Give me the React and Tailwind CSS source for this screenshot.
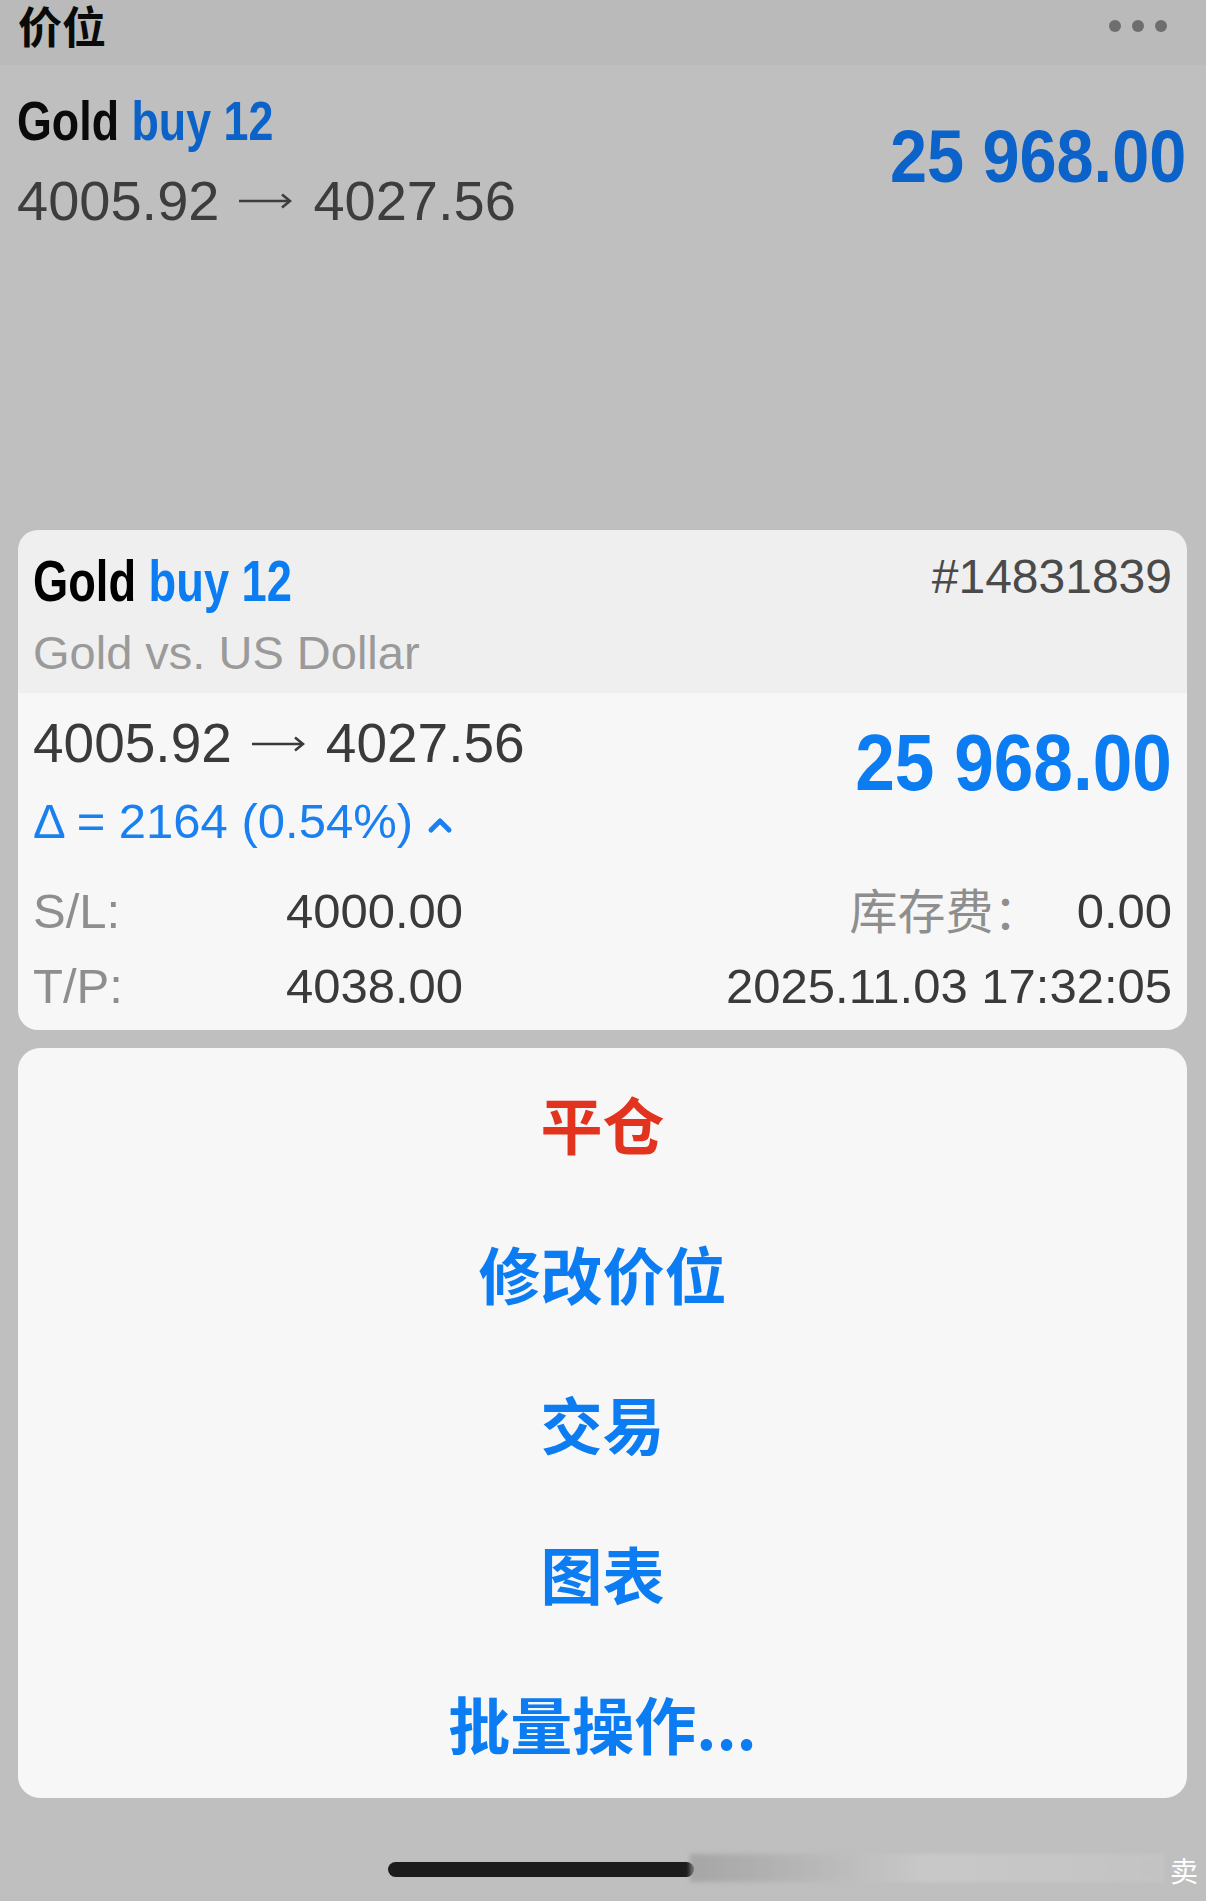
import React from "react";

function Arrow({ color }) {
  return (
    <svg width="54" height="16" viewBox="0 0 54 16" className="shrink-0">
      <line x1="1" y1="8" x2="51" y2="8" stroke={color} strokeWidth="2.6" />
      <polyline points="44,1.5 52,8 44,14.5" fill="none" stroke={color} strokeWidth="2.6" strokeLinejoin="miter" />
    </svg>
  );
}

function PriceLine({ color, big }) {
  return (
    <div className={(big ? "text-[56px]" : "text-[55px]") + " flex items-center leading-none whitespace-nowrap"} style={{ color }}>
      <span>4005.92</span>
      <span className="ml-[19px] mr-[21px] flex items-center"><Arrow color={color} /></span>
      <span>4027.56</span>
    </div>
  );
}

export default function App() {
  return (
    <div className="w-[1206px] h-[1901px] bg-[#bfbfbf] overflow-hidden font-['Liberation_Sans','Noto_Sans_CJK_SC',sans-serif] flex flex-col">
      {/* header */}
      <div className="h-[65px] bg-[#bababa] flex items-start justify-between pl-[18px] pr-[39px] shrink-0">
        <div className="text-[44px] leading-[50px] font-bold text-[#0a0a0a] font-['Noto_Sans_CJK_SC',sans-serif]">价位</div>
        <div className="flex gap-[11px] pt-[20px]">
          <span className="w-[12px] h-[12px] rounded-full bg-[#6e6e6e]" />
          <span className="w-[12px] h-[12px] rounded-full bg-[#6e6e6e]" />
          <span className="w-[12px] h-[12px] rounded-full bg-[#6e6e6e]" />
        </div>
      </div>

      {/* dimmed row */}
      <div className="h-[465px] shrink-0 flex justify-between items-start pl-[17px] pr-[20px]">
        <div className="flex flex-col pt-[28px]">
          <div className="text-[56px] leading-none font-bold whitespace-nowrap origin-left scale-x-[0.8]">
            <span className="text-[#0a0a0a]">Gold</span> <span className="text-[#0b62c9]">buy 12</span>
          </div>
          <div className="mt-[24px]">
            <PriceLine color="#3d3d3d" big />
          </div>
        </div>
        <div className="pt-[55px] text-[74px] leading-none font-bold text-[#0b62c9] whitespace-nowrap origin-right scale-x-[0.9]">25 968.00</div>
      </div>

      {/* position card */}
      <div className="mx-[18px] w-[1169px] rounded-[20px] overflow-hidden shrink-0">
        <div className="h-[163px] bg-[#efefef] pl-[15px] pr-[15px] pt-[22px]">
          <div className="flex justify-between items-start">
            <div className="text-[58px] leading-none font-bold whitespace-nowrap origin-left scale-x-[0.78]">
              <span className="text-black">Gold</span> <span className="text-[#0b7cf2]">buy 12</span>
            </div>
            <div className="mt-[1px] text-[48px] leading-none text-[#4a4a4a]">#14831839</div>
          </div>
          <div className="mt-[19px] text-[47px] leading-none text-[#9a9a9a] whitespace-nowrap">Gold vs. US Dollar</div>
        </div>
        <div className="h-[337px] bg-[#f7f7f7] pl-[15px] pr-[15px] pt-[23px]">
          <div className="flex justify-between items-start">
            <div className="flex flex-col">
              <PriceLine color="#3a3a3c" />
              <div className="mt-[26px] flex items-center gap-[13px] text-[49px] leading-none text-[#1a80f0] whitespace-nowrap">
                <span>Δ = 2164 (0.54%)</span>
                <svg width="28" height="18" viewBox="0 0 28 18" className="mt-[6px]">
                  <polyline points="5,14 14,5 23,14" fill="none" stroke="#1a80f0" strokeWidth="5" strokeLinecap="round" strokeLinejoin="round" />
                </svg>
              </div>
            </div>
            <div className="mt-[7px] text-[80px] leading-none font-bold text-[#0b7cf2] whitespace-nowrap origin-right scale-x-[0.89]">25 968.00</div>
          </div>
          <div className="mt-[41px] flex items-start text-[49px] leading-none">
            <span className="w-[253px] text-[#8e8e8e]">S/L:</span>
            <span className="text-[#3a3a3c]">4000.00</span>
            <span className="ml-auto mt-[-3px] text-[#8e8e8e] font-['Noto_Sans_CJK_SC',sans-serif] text-[48px]">库存费：</span>
            <span className="ml-[35px] text-[#3a3a3c]">0.00</span>
          </div>
          <div className="mt-[26px] flex items-start text-[49px] leading-none">
            <span className="w-[253px] text-[#8e8e8e]">T/P:</span>
            <span className="text-[#3a3a3c]">4038.00</span>
            <span className="ml-auto text-[#3a3a3c]">2025.11.03 17:32:05</span>
          </div>
        </div>
      </div>

      {/* action sheet */}
      <div className="mt-[18px] mx-[18px] w-[1169px] h-[750px] rounded-[22px] bg-[#f7f7f7] flex flex-col shrink-0 font-['Noto_Sans_CJK_SC',sans-serif] font-bold text-[62px] leading-none">
        <div className="h-[150px] flex items-center justify-center text-[#e2331f]">平仓</div>
        <div className="h-[150px] flex items-center justify-center text-[#0b7cf2]">修改价位</div>
        <div className="h-[150px] flex items-center justify-center text-[#0b7cf2]">交易</div>
        <div className="h-[150px] flex items-center justify-center text-[#0b7cf2]">图表</div>
        <div className="h-[150px] flex items-center justify-center text-[#0b7cf2]">批量操作...</div>
      </div>

      {/* home indicator */}
      <div className="relative flex-1">
        <div className="absolute left-[388px] top-[64px] w-[306px] h-[15px] rounded-full bg-[#1c1c1c]" />
        <div className="absolute left-[690px] top-[56px] w-[475px] h-[28px] bg-gradient-to-r from-[#9c9c9c] via-[#cdcdcd] to-[#c6c6c6] opacity-70 blur-[2px]" />
        <div className="absolute left-[1170px] top-[58px] text-[28px] leading-none text-white font-['Noto_Sans_CJK_SC',sans-serif]">卖</div>
      </div>
    </div>
  );
}
